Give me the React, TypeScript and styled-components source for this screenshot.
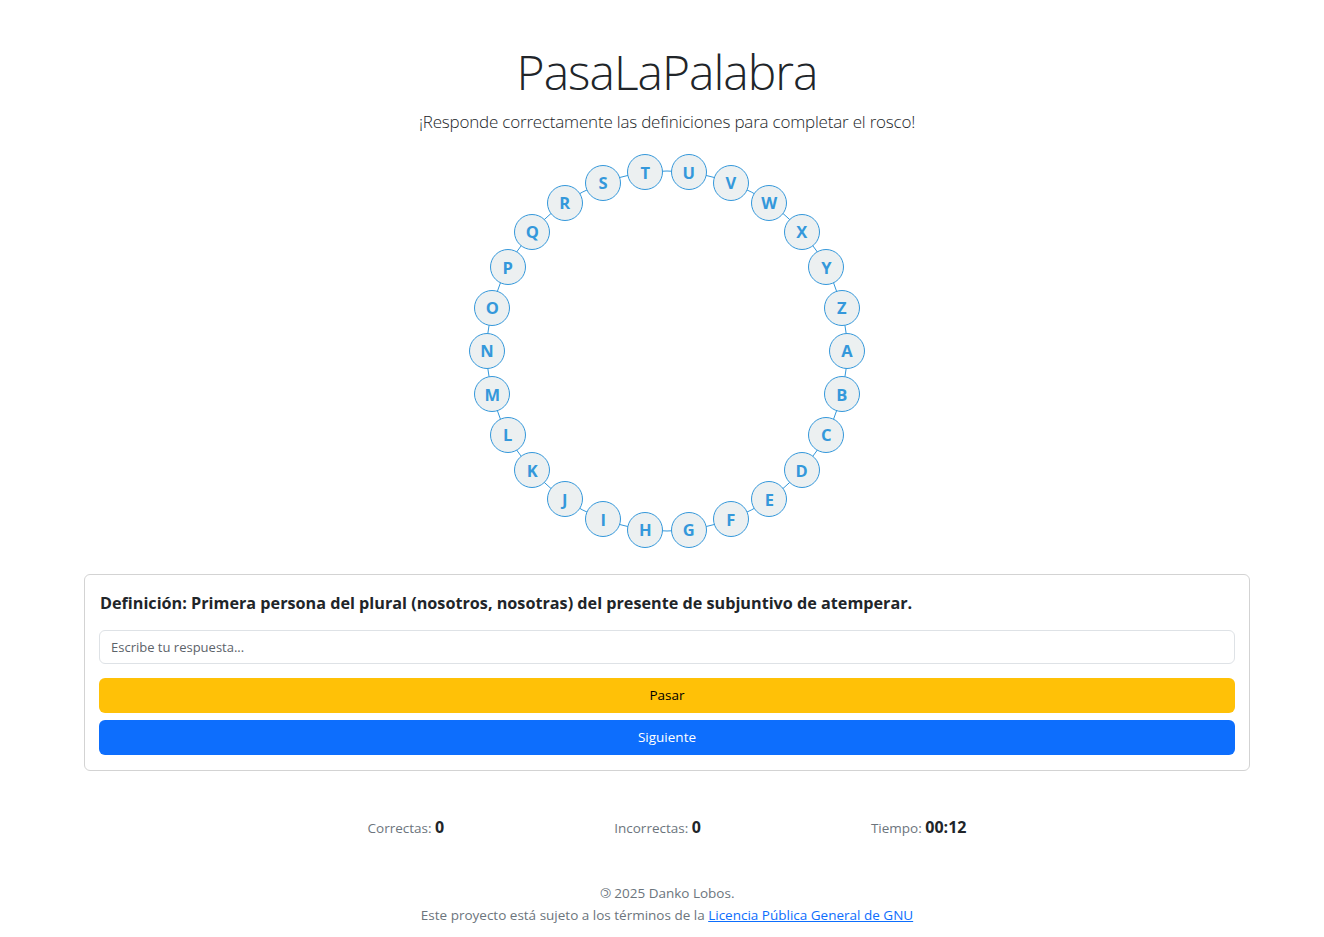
import React from 'react';
import styled, { createGlobalStyle } from 'styled-components';

const GlobalStyle = createGlobalStyle`
  * { box-sizing: border-box; }
  body {
    margin: 0;
    background: #fff;
    font-family: "Open Sans", "Noto Sans", sans-serif;
    color: #212529;
  }
`;

const LETTERS = 'ABCDEFGHIJKLMNOPQRSTUVWXYZ'.split('');
const R = 180;
const SIZE = 36;
const BOX = 2 * R + SIZE;

const Page = styled.main`
  padding-left: 10px;
  display: flex;
  flex-direction: column;
  align-items: center;
`;

const Title = styled.h1`
  margin: 43px 0 0;
  font-size: 48px;
  font-weight: 300;
  letter-spacing: -1px;
  line-height: 1.2;
  color: #212529;
`;

const Lead = styled.p`
  margin: 11px 0 21px;
  font-size: 17px;
  font-weight: 300;
  letter-spacing: -0.2px;
  line-height: 1.2;
  color: #212529;
`;

const Rosco = styled.div`
  position: relative;
  width: ${BOX}px;
  height: ${BOX}px;
`;

const Ring = styled.svg`
  position: absolute;
  inset: 0;
`;

const Letter = styled.div`
  position: absolute;
  width: ${SIZE}px;
  height: ${SIZE}px;
  border-radius: 50%;
  background: #ecf0f1;
  border: 1px solid #3498db;
  color: #3498db;
  font-weight: 700;
  font-size: 16.5px;
  display: flex;
  align-items: center;
  justify-content: center;
`;

const Card = styled.section`
  width: 1166px;
  margin-top: 25px;
  border: 1px solid #d3d3d3;
  border-radius: 6px;
  padding: 15px 14px 15px 14px;
  display: flex;
  flex-direction: column;
`;

const Definition = styled.h5`
  margin: 2px 0 16px 1px;
  font-size: 16.2px;
  font-weight: 700;
  line-height: 22px;
  color: #212529;
`;

const Input = styled.input`
  height: 34px;
  width: 100%;
  border: 1px solid #dee2e6;
  border-radius: 6px;
  padding: 0 11px;
  font-family: inherit;
  font-size: 13px;
  color: #212529;
  margin-bottom: 14px;
  &::placeholder { color: #5c636a; }
`;

const Button = styled.button<{ $variant: 'warning' | 'primary' }>`
  height: 35px;
  width: 100%;
  border: none;
  border-radius: 6px;
  font-family: inherit;
  font-size: 13.5px;
  background: ${p => (p.$variant === 'warning' ? '#ffc107' : '#0d6efd')};
  color: ${p => (p.$variant === 'warning' ? '#000' : '#fff')};
  & + & { margin-top: 7px; }
`;

const Stats = styled.div`
  display: flex;
  justify-content: center;
  gap: 170px;
  margin-top: 45px;
  align-items: baseline;
`;

const Stat = styled.div`
  font-size: 13.5px;
  color: #6c757d;
`;

const Value = styled.span`
  font-size: 16px;
  font-weight: 700;
  color: #212529;
`;

const Footer = styled.footer`
  margin-top: 44px;
  text-align: center;
  font-size: 13.5px;
  line-height: 22px;
  color: #6c757d;
`;

const Copyleft = styled.span`
  display: inline-block;
  transform: scaleX(-1);
`;

const Link = styled.a`
  color: #0d6efd;
  text-decoration: underline;
`;

export default function App() {
  return (
    <>
      <GlobalStyle />
      <Page>
        <Title>PasaLaPalabra</Title>
        <Lead>¡Responde correctamente las definiciones para completar el rosco!</Lead>
        <Rosco>
          <Ring width={BOX} height={BOX} viewBox={`0 0 ${BOX} ${BOX}`}>
            <circle cx={BOX / 2} cy={BOX / 2} r={R} fill="none" stroke="#3498db" strokeWidth={1} />
          </Ring>
          {LETTERS.map((l, i) => {
            const a = (i * 2 * Math.PI) / LETTERS.length;
            const left = R + R * Math.cos(a);
            const top = R + R * Math.sin(a);
            return (
              <Letter key={l} style={{ left, top }}>
                {l}
              </Letter>
            );
          })}
        </Rosco>
        <Card>
          <Definition>
            Definición: Primera persona del plural (nosotros, nosotras) del presente de subjuntivo de atemperar.
          </Definition>
          <Input placeholder="Escribe tu respuesta..." />
          <Button $variant="warning">Pasar</Button>
          <Button $variant="primary">Siguiente</Button>
        </Card>
        <Stats>
          <Stat>
            Correctas: <Value>0</Value>
          </Stat>
          <Stat>
            Incorrectas: <Value>0</Value>
          </Stat>
          <Stat>
            Tiempo: <Value>00:12</Value>
          </Stat>
        </Stats>
        <Footer>
          <div>
            <Copyleft>©</Copyleft> 2025 Danko Lobos.
          </div>
          <div>
            Este proyecto está sujeto a los términos de la{' '}
            <Link href="#">Licencia Pública General de GNU</Link>
          </div>
        </Footer>
      </Page>
    </>
  );
}
